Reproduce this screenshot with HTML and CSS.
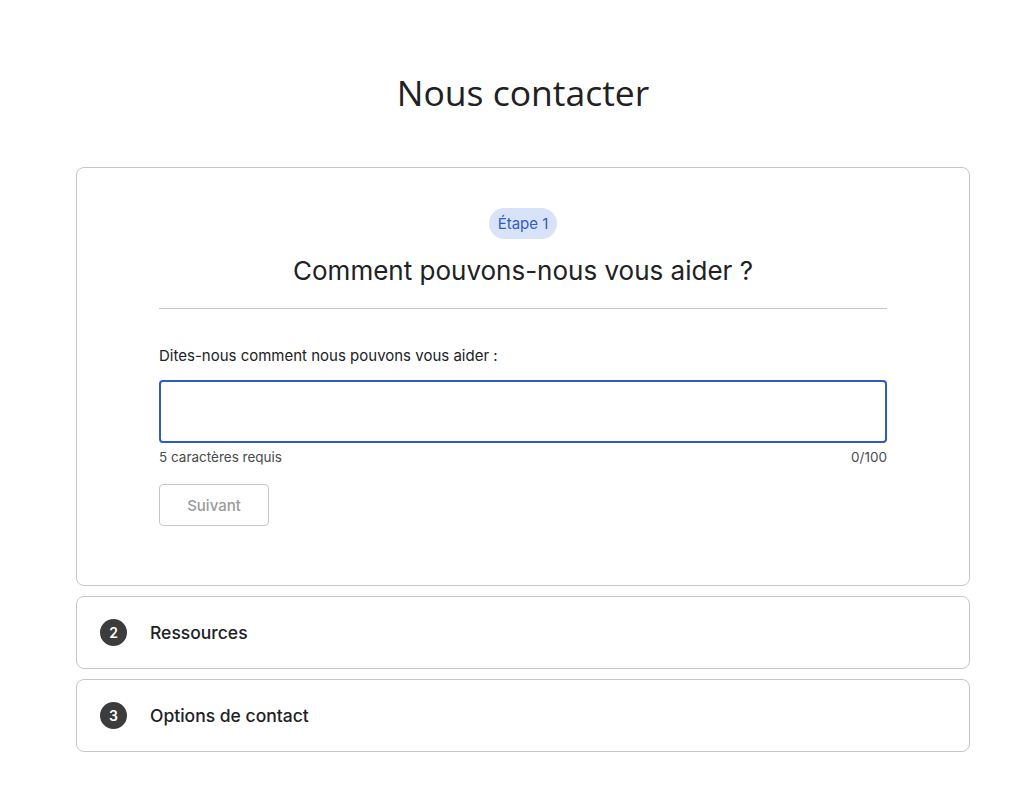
FILE: index.html
```html
<!DOCTYPE html>
<html lang="fr">
<head>
<meta charset="utf-8">
<title>Nous contacter</title>
<link rel="stylesheet" href="styles.css">
</head>
<body>
<main class="page">
  <h1 class="page-title">Nous contacter</h1>

  <section class="card card-open">
    <div class="step-chip">Étape 1</div>
    <h2 class="step-title">Comment pouvons-nous vous aider ?</h2>
    <hr class="divider">
    <label class="field-label" for="q">Dites-nous comment nous pouvons vous aider :</label>
    <div class="input-box"><input id="q" class="text-input" type="text"></div>
    <div class="helper-row">
      <span>5 caractères requis</span>
      <span>0/100</span>
    </div>
    <button class="btn-next" type="button" disabled>Suivant</button>
  </section>

  <section class="card card-step">
    <span class="step-num">2</span>
    <span class="step-name">Ressources</span>
  </section>

  <section class="card card-step">
    <span class="step-num">3</span>
    <span class="step-name">Options de contact</span>
  </section>
</main>
</body>
</html>
```

FILE: styles.css
```css
* { box-sizing: border-box; }

html, body {
  margin: 0;
  padding: 0;
  background: #ffffff;
}

body {
  font-family: Inter, "Liberation Sans", sans-serif;
  color: #202124;
}

.page {
  width: 894px;
  margin-left: 76px;
  padding-top: 68px;
}

.page-title {
  margin: 0 0 51px;
  text-align: center;
  font-family: "Open Sans", "Liberation Sans", sans-serif;
  font-size: 35.5px;
  font-weight: 400;
  line-height: 48px;
  color: #202124;
}

.card {
  border: 1px solid #c4c7c5;
  border-radius: 8px;
  background: #fff;
  margin-bottom: 10px;
}

.card-open {
  padding: 40px 82px 59px;
  display: flex;
  flex-direction: column;
}

.step-chip {
  align-self: center;
  background: #d8e3fa;
  color: #2f5bc8;
  font-size: 15px;
  line-height: 31px;
  height: 31px;
  padding: 0 9px;
  border-radius: 16px;
}

.step-title {
  margin: 14px 0 0;
  text-align: center;
  font-size: 26px;
  font-weight: 400;
  line-height: 36px;
  color: #202124;
}

.divider {
  width: 100%;
  margin: 19px 0 0;
  border: 0;
  border-top: 1px solid #c4c7c5;
}

.field-label {
  margin-top: 37px;
  font-size: 15px;
  line-height: 20px;
  color: #202124;
}

.input-box {
  margin-top: 14px;
  height: 63px;
  border: 2px solid #2f5bc8;
  border-radius: 4px;
}

.text-input {
  width: 100%;
  height: 100%;
  border: 0;
  outline: none;
  background: transparent;
  font: inherit;
  padding: 0 14px;
}

.helper-row {
  display: flex;
  justify-content: space-between;
  margin-top: 6px;
  font-size: 13.5px;
  line-height: 16px;
  color: #4a4a4a;
}

.btn-next {
  align-self: flex-start;
  margin-top: 19px;
  width: 110px;
  height: 42px;
  border: 1px solid #c4c7c5;
  border-radius: 4px;
  background: #fff;
  color: #9a9b9c;
  font-family: inherit;
  font-size: 15px;
  font-weight: 500;
}

.card-step {
  height: 73px;
  display: flex;
  align-items: center;
  padding-left: 23px;
}

.card-step + .card-step {
  margin-top: 1px;
}

.step-num {
  width: 27px;
  height: 27px;
  border-radius: 50%;
  background: #3c3c3c;
  color: #fff;
  font-size: 14px;
  font-weight: 600;
  display: flex;
  align-items: center;
  justify-content: center;
}

.step-name {
  margin-left: 23px;
  font-size: 17.5px;
  font-weight: 500;
  color: #202124;
}
```
